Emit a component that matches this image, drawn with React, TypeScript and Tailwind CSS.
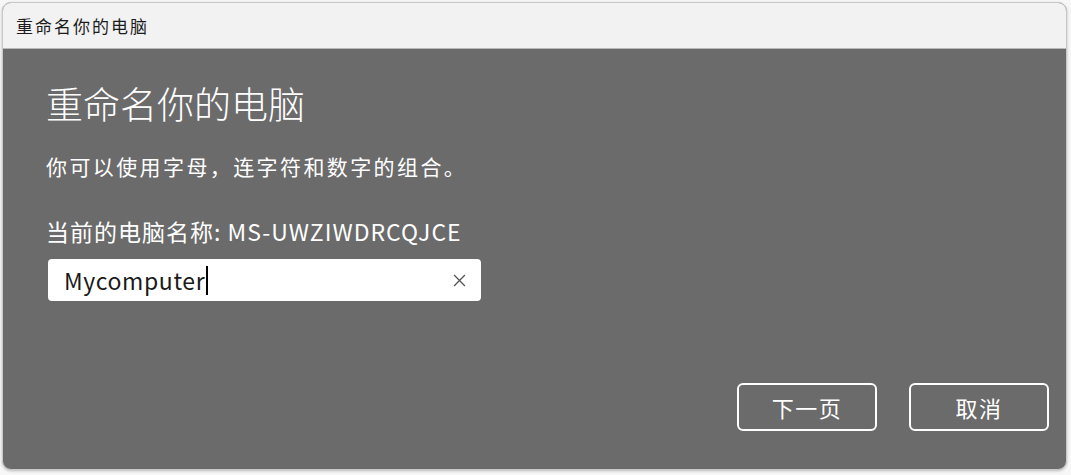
import React from "react";

export default function App() {
  const font = { fontFamily: '"Noto Sans CJK SC", "Noto Sans", sans-serif' };
  return (
    <div className="w-[1071px] h-[475px] bg-[#f7f7f7] p-[2px] pr-[4px] pb-[5px]" style={font}>
      <div className="h-full w-full rounded-[9px] border border-[#c8c8c8] overflow-hidden flex flex-col bg-[#6b6b6b] shadow-[0_1px_3px_rgba(0,0,0,0.25)]">
        <div className="h-[46px] shrink-0 bg-[#f2f2f2] border-b border-[#b9b9b9] flex items-center pl-[13px] text-[17px] tracking-[2px] text-[#1c1c1c]">
          重命名你的电脑
        </div>
        <div className="flex-1 flex flex-col pl-[43px] pt-[32px] text-white">
          <div className="text-[37px] leading-[44px] font-light">重命名你的电脑</div>
          <div className="mt-[26px] text-[21px] tracking-[2.4px] leading-[30px]">你可以使用字母，连字符和数字的组合。</div>
          <div className="mt-[35px] text-[23px] leading-[30px] tracking-[1px]">当前的电脑名称: MS-UWZIWDRCQJCE</div>
          <div className="mt-[13px] ml-[2px] w-[433px] h-[42px] bg-white rounded-[4px] flex items-center pl-[16px] pr-[15px]">
            <span className="text-[23px] text-[#1a1a1a] tracking-[0.6px]">Mycomputer</span>
            <span className="w-[1.5px] h-[29px] bg-black ml-[1px]" />
            <span className="ml-auto flex items-center">
              <svg width="13" height="13" viewBox="0 0 12 12" fill="none" stroke="#555" strokeWidth="1.2">
                <path d="M1 1 L11 11 M11 1 L1 11" />
              </svg>
            </span>
          </div>
          <div className="flex-1" />
          <div className="flex justify-end gap-[32px] pb-[38px] pr-[17px]">
            <button className="w-[140px] h-[48px] border-2 border-white rounded-[6px] text-[22px] tracking-[1.5px] text-white">下一页</button>
            <button className="w-[140px] h-[48px] border-2 border-white rounded-[6px] text-[22px] tracking-[1.5px] text-white">取消</button>
          </div>
        </div>
      </div>
    </div>
  );
}
